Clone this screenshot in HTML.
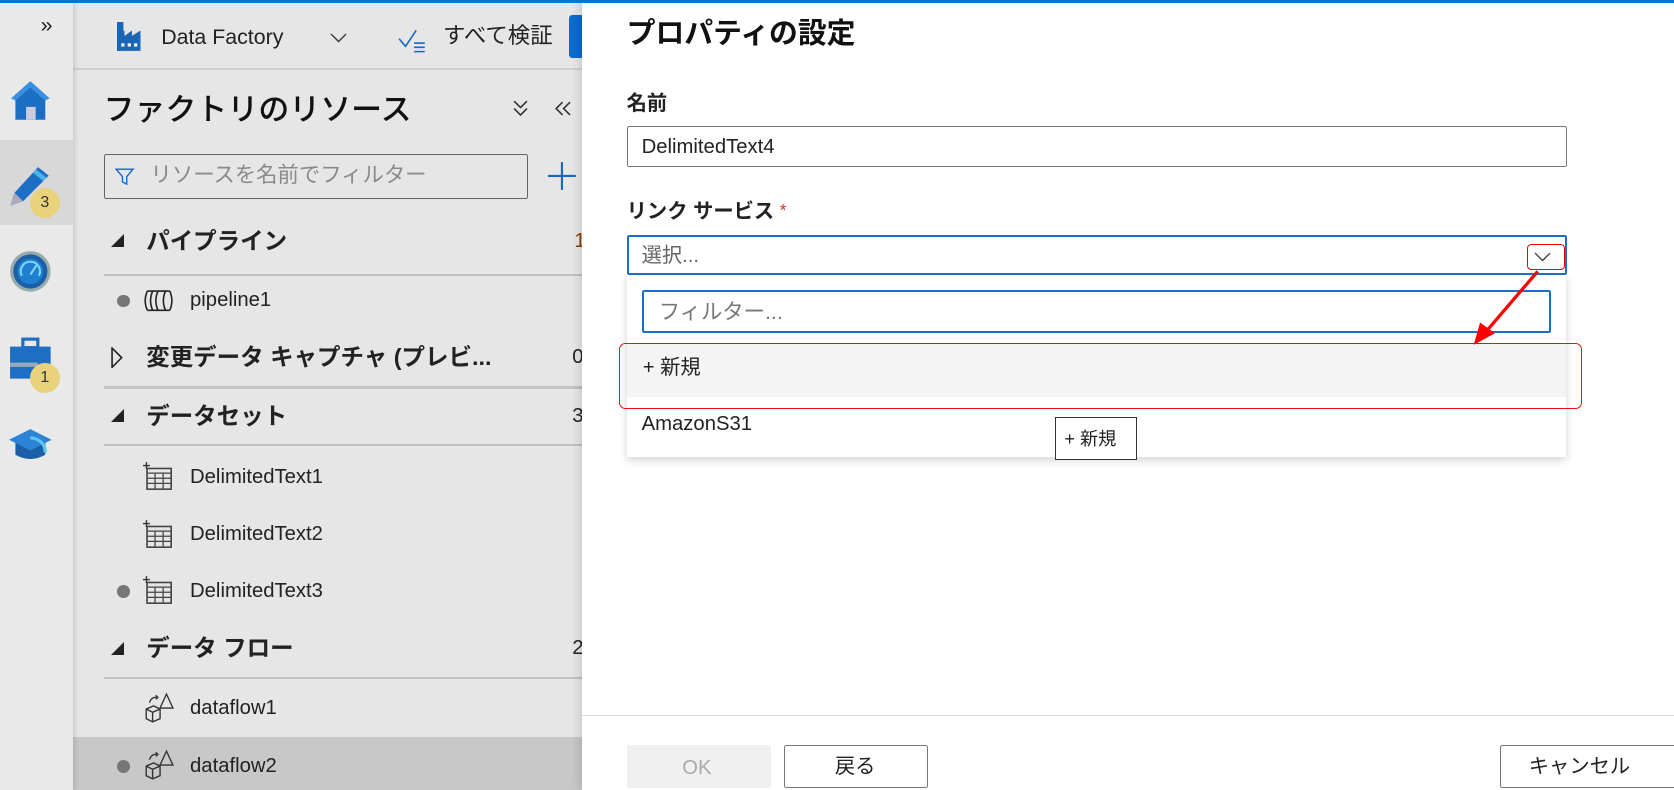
<!DOCTYPE html>
<html><head><meta charset="utf-8"><style>
*{margin:0;padding:0;box-sizing:border-box}
html,body{width:1674px;height:790px;overflow:hidden;background:#fff}
#w{zoom:1.06760;width:1568px;height:740px;position:relative;font-family:"Liberation Sans","Noto Sans CJK JP",sans-serif;color:#222}
.a{position:absolute}
.t{position:absolute;white-space:nowrap;line-height:1}
.hl{position:absolute;left:97px;width:448px;height:2px;background:#c2c2c2}
.row{font-size:19px}
.hd{font-size:22px;font-weight:bold}
.tri{position:absolute;width:0;height:0;border-left:13px solid transparent;border-bottom:13px solid #222}
.dot{position:absolute;width:12px;height:12px;border-radius:50%;background:#777}
.badge{position:absolute;width:28px;height:28px;border-radius:50%;background:#e9d27c;font-size:15px;text-align:center;line-height:28px;color:#333}
</style></head><body><div id="w">
<div class="a" style="left:0;top:0;width:68px;height:740px;background:#e9e9e9;box-shadow:2px 0 5px rgba(0,0,0,.15);z-index:2"></div>
<div class="a" style="left:68px;top:0;width:477px;height:740px;background:#e6e6e6"></div>
<div class="a" style="left:0;top:131px;width:68px;height:80px;background:#d8d8d8;z-index:3"></div>
<div class="a" style="left:0;top:0;width:1568px;height:3px;background:#0078d4;z-index:9"></div>
<!-- rail -->
<div class="t" style="left:38px;top:14px;font-size:20px;z-index:4">»</div>
<svg class="a" style="left:8px;top:72px;z-index:4" width="40" height="45" viewBox="0 0 40 45"><path d="M20 4 L2 20 L6 20 L6 40 L34 40 L34 20 L38 20 Z" fill="#1c6ec4"/><path d="M20 4 L2 20 L6 22 L20 10 L34 22 L38 20Z" fill="#3b8fe0"/><rect x="16" y="28" width="9" height="12" fill="#ccd"/></svg>
<svg class="a" style="left:6px;top:155px;z-index:4" width="44" height="40" viewBox="0 0 44 40"><path d="M30 2 L40 10 L16 34 L4 38 L8 26 Z" fill="#1d6fc6"/><path d="M28 4 L38 12 L35 15 L25 7Z" fill="#50b3e6"/><path d="M8 26 L16 34 L4 38Z" fill="#aab"/></svg>
<div class="badge" style="left:28px;top:176px;z-index:5">3</div>
<svg class="a" style="left:8px;top:233px;z-index:4" width="40" height="42" viewBox="0 0 40 42"><circle cx="20" cy="21" r="19" fill="#9aa"/><circle cx="20" cy="21" r="16" fill="#1a5fa8"/><circle cx="20" cy="21" r="12" fill="#1f7fd0"/><path d="M12 25 A9 9 0 1 1 28 25" stroke="#7fd3f7" stroke-width="2" fill="none"/><path d="M20 24 L26 15" stroke="#7fd3f7" stroke-width="2"/></svg>
<svg class="a" style="left:8px;top:316px;z-index:4" width="40" height="44" viewBox="0 0 40 44"><rect x="13" y="2" width="14" height="8" fill="none" stroke="#1e6fc4" stroke-width="3"/><rect x="1" y="9" width="38" height="30" fill="#1e6fc4"/><rect x="1" y="24" width="26" height="4" fill="#9ab"/></svg>
<div class="badge" style="left:28px;top:340px;z-index:5">1</div>
<svg class="a" style="left:8px;top:400px;z-index:4" width="40" height="34" viewBox="0 0 40 34"><path d="M6 14 L6 26 Q20 34 34 26 L34 14Z" fill="#1a5fa8"/><path d="M0 12 L20 2 L40 12 L20 22Z" fill="#2b84d8"/><path d="M20 10 Q34 12 34 24" stroke="#5cc8ea" stroke-width="3" fill="none"/></svg>
<!-- toolbar -->
<svg class="a" style="left:110px;top:21px" width="22" height="27" viewBox="0 0 22 27"><rect x="0" y="0" width="6" height="27" fill="#1a66b5"/><path d="M0 27 L0 13 L7 8 L7 13 L14 8 L14 13 L22 8 L22 27Z" fill="#1a66b5"/><rect x="4" y="20" width="3" height="3" fill="#fff"/><rect x="10" y="20" width="3" height="3" fill="#fff"/><rect x="16" y="20" width="3" height="3" fill="#fff"/></svg>
<div class="t" style="left:151px;top:25px;font-size:20px">Data Factory</div>
<svg class="a" style="left:309px;top:31px" width="16" height="10"><path d="M1 1 L8 8 L15 1" stroke="#333" stroke-width="1.3" fill="none"/></svg>
<svg class="a" style="left:372px;top:24px" width="30" height="26"><path d="M2 12 L8 19 L18 4" stroke="#1a66c4" stroke-width="1.5" fill="none"/><path d="M16 16h10M16 20h10M16 24h10" stroke="#1a66c4" stroke-width="1.5"/></svg>
<div class="t" style="left:415px;top:23px;font-size:21px">すべて検証</div>
<div class="a" style="left:533px;top:14px;width:14px;height:40px;background:#0a6ccc;border-radius:3px"></div>
<div class="a" style="left:68px;top:64px;width:477px;height:2px;background:#d0d0d0"></div>
<div class="t" style="left:97px;top:89px;font-size:29px;font-weight:500;color:#111">ファクトリのリソース</div>
<svg class="a" style="left:480px;top:93px" width="16" height="18"><path d="M2 2 L8 8 L14 2M2 9 L8 15 L14 9" stroke="#333" stroke-width="1.5" fill="none"/></svg>
<svg class="a" style="left:519px;top:94px" width="18" height="16"><path d="M8 2 L2 8 L8 14M15 2 L9 8 L15 14" stroke="#333" stroke-width="1.5" fill="none"/></svg>
<div class="a" style="left:97px;top:144px;width:398px;height:42px;border:1px solid #666;border-radius:2px"></div>
<svg class="a" style="left:108px;top:156px" width="18" height="18"><path d="M1 2 H17 L11 9 V16 L7 14 V9Z" stroke="#1a66c4" stroke-width="1.3" fill="none"/></svg>
<div class="t" style="left:141px;top:155px;font-size:20px;color:#8a8a8a">リソースを名前でフィルター</div>
<svg class="a" style="left:512px;top:151px" width="28" height="28"><path d="M14 1V27M1 14H27" stroke="#1a66c4" stroke-width="2"/></svg>
<!-- tree -->
<div class="a" style="left:68px;top:690px;width:477px;height:50px;background:#c8c8c8"></div>
<div class="tri" style="left:104px;top:219px"></div>
<div class="t hd" style="left:137px;top:215px">パイプライン</div><div class="t" style="left:538px;top:216px;font-size:19px;color:#8a3c00">1</div>
<div class="hl" style="top:257px"></div>
<div class="dot" style="left:110px;top:276px"></div>
<svg class="a" style="left:133px;top:272px" width="32" height="20"><path d="M5 1 Q1 10 5 19 M10 1 Q6 10 10 19 M15 1 Q11 10 15 19 M5 1 H26 M5 19 H26 M26 1 Q30 10 26 19 M22 1 Q18 10 22 19" stroke="#222" stroke-width="1.5" fill="none"/></svg>
<div class="t row" style="left:178px;top:272px">pipeline1</div>
<svg class="a" style="left:104px;top:325px" width="12" height="20"><path d="M1 1 L10 10 L1 19Z" stroke="#222" stroke-width="1.5" fill="none"/></svg>
<div class="t hd" style="left:137px;top:324px">変更データ キャプチャ (プレビ...</div><div class="t" style="left:536px;top:325px;font-size:19px">0</div>
<div class="hl" style="top:362px"></div>
<div class="tri" style="left:104px;top:383px"></div>
<div class="t hd" style="left:137px;top:379px">データセット</div><div class="t" style="left:536px;top:380px;font-size:19px">3</div>
<div class="hl" style="top:416px"></div>
<div class="tri" style="left:104px;top:601px"></div>
<div class="t hd" style="left:137px;top:597px">データ フロー</div><div class="t" style="left:536px;top:598px;font-size:19px">2</div>
<div class="hl" style="top:634px"></div>
<svg class="a" style="left:134px;top:432px" width="28" height="28" viewBox="0 0 26 26"><path d="M3 1v6M0 4h6" stroke="#333" stroke-width="1.2"/><rect x="3.5" y="6.5" width="21" height="18" fill="none" stroke="#444" stroke-width="1.4"/><path d="M3.5 10.5h21M3.5 15h21M3.5 19.5h21M10.5 10.5v14M17.5 10.5v14" stroke="#444" stroke-width="1.1"/></svg>
<div class="t row" style="left:178px;top:437px">DelimitedText1</div>
<svg class="a" style="left:134px;top:486px" width="28" height="28" viewBox="0 0 26 26"><path d="M3 1v6M0 4h6" stroke="#333" stroke-width="1.2"/><rect x="3.5" y="6.5" width="21" height="18" fill="none" stroke="#444" stroke-width="1.4"/><path d="M3.5 10.5h21M3.5 15h21M3.5 19.5h21M10.5 10.5v14M17.5 10.5v14" stroke="#444" stroke-width="1.1"/></svg>
<div class="t row" style="left:178px;top:491px">DelimitedText2</div>
<div class="dot" style="left:110px;top:548px"></div>
<svg class="a" style="left:134px;top:539px" width="28" height="28" viewBox="0 0 26 26"><path d="M3 1v6M0 4h6" stroke="#333" stroke-width="1.2"/><rect x="3.5" y="6.5" width="21" height="18" fill="none" stroke="#444" stroke-width="1.4"/><path d="M3.5 10.5h21M3.5 15h21M3.5 19.5h21M10.5 10.5v14M17.5 10.5v14" stroke="#444" stroke-width="1.1"/></svg>
<div class="t row" style="left:178px;top:544px">DelimitedText3</div>
<svg class="a" style="left:134px;top:648px" width="30" height="30" viewBox="0 0 30 30"><path d="M3 16 L10 13 L16 16 L16 25 L9 28 L3 25Z M3 16 L9 19 L16 16 M9 19 V28" stroke="#333" stroke-width="1.3" fill="none"/><path d="M22 2 L28 15 H16Z" stroke="#333" stroke-width="1.3" fill="none"/><path d="M6 10 Q8 4 14 5 M12 3 L14 5 L12 7" stroke="#333" stroke-width="1.2" fill="none"/></svg>
<div class="t row" style="left:178px;top:654px">dataflow1</div>
<div class="dot" style="left:110px;top:712px"></div>
<svg class="a" style="left:134px;top:702px" width="30" height="30" viewBox="0 0 30 30"><path d="M3 16 L10 13 L16 16 L16 25 L9 28 L3 25Z M3 16 L9 19 L16 16 M9 19 V28" stroke="#333" stroke-width="1.3" fill="none"/><path d="M22 2 L28 15 H16Z" stroke="#333" stroke-width="1.3" fill="none"/><path d="M6 10 Q8 4 14 5 M12 3 L14 5 L12 7" stroke="#333" stroke-width="1.2" fill="none"/></svg>
<div class="t row" style="left:178px;top:708px">dataflow2</div>
<!-- dialog -->
<div class="a" style="left:545px;top:0;width:1023px;height:740px;background:#fff;box-shadow:-3px 0 8px rgba(0,0,0,.12)"></div>
<div class="a" style="left:545px;top:0;width:1023px;height:3px;background:#0078d4"></div>
<div class="t" style="left:587px;top:19px;font-size:27px;font-weight:bold;color:#111">プロパティの設定</div>
<div class="t" style="left:587px;top:88px;font-size:19px;font-weight:bold">名前</div>
<div class="a" style="left:587px;top:118px;width:881px;height:38px;border:1px solid #777;border-radius:2px"></div>
<div class="t" style="left:601px;top:128px;font-size:19px">DelimitedText4</div>
<div class="t" style="left:587px;top:189px;font-size:19px;font-weight:bold">リンク サービス <span style="color:#c33;font-weight:normal;font-size:16px;vertical-align:top">*</span></div>
<div class="a" style="left:587px;top:257px;width:880px;height:171px;background:#fff;box-shadow:0 3px 8px rgba(0,0,0,.18)"></div>
<div class="a" style="left:587px;top:220px;width:881px;height:38px;border:2px solid #1a6ec6;border-radius:2px;background:#fff"></div>
<div class="t" style="left:601px;top:230px;font-size:19px;color:#666">選択...</div>
<svg class="a" style="left:1437px;top:236px" width="16" height="10"><path d="M1 1 L8 8 L15 1" stroke="#444" stroke-width="1.3" fill="none"/></svg>
<div class="a" style="left:1430px;top:229px;width:36px;height:24px;border:1.5px solid #e00;border-radius:4px"></div>
<div class="a" style="left:601px;top:272px;width:852px;height:40px;border:2px solid #1a6ec6;border-radius:2px"></div>
<div class="t" style="left:617px;top:283px;font-size:20px;color:#777">フィルター...</div>
<div class="a" style="left:587px;top:322px;width:880px;height:50px;background:#f4f4f4"></div>
<div class="t" style="left:602px;top:335px;font-size:19px">+ 新規</div>
<div class="a" style="left:580px;top:321px;width:902px;height:62px;border:1.5px solid #e81010;border-radius:6px"></div>
<div class="t" style="left:601px;top:388px;font-size:19px">AmazonS31</div>
<div class="a" style="left:988px;top:391px;width:77px;height:40px;background:#fff;border:1px solid #333"></div>
<div class="t" style="left:997px;top:403px;font-size:17px">+ 新規</div>
<svg class="a" style="left:1370px;top:250px" width="80" height="80"><path d="M70 4 L22 60" stroke="#f00" stroke-width="3"/><path d="M10 73 L16 52 L30 62Z" fill="#f00"/></svg>
<div class="a" style="left:545px;top:670px;width:1023px;height:1px;background:#d8d8d8"></div>
<div class="a" style="left:587px;top:698px;width:135px;height:40px;background:#f0f0f0;border-radius:2px"></div>
<div class="t" style="left:639px;top:710px;font-size:19px;color:#aaa">OK</div>
<div class="a" style="left:734px;top:698px;width:135px;height:40px;border:1px solid #777;border-radius:2px"></div>
<div class="t" style="left:782px;top:709px;font-size:19px">戻る</div>
<div class="a" style="left:1405px;top:698px;width:170px;height:40px;border:1px solid #777;border-radius:2px"></div>
<div class="t" style="left:1432px;top:709px;font-size:19px">キャンセル</div>
</div></body></html>
